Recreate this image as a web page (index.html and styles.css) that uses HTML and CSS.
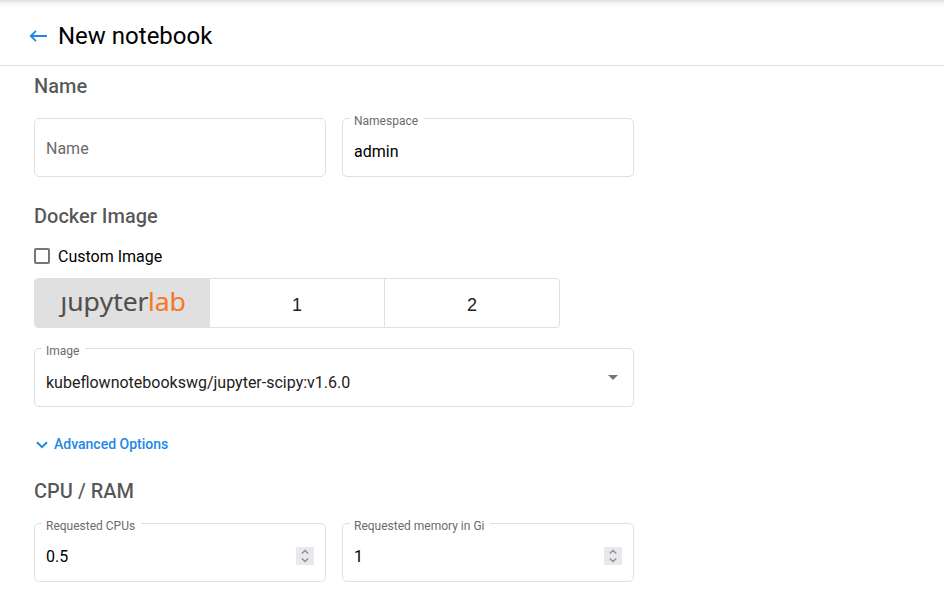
FILE: index.html
```html
<!DOCTYPE html>
<html lang="en">
<head>
<meta charset="utf-8">
<title>New notebook</title>
<link rel="stylesheet" href="styles.css">
</head>
<body>
<header class="toolbar">
  <svg class="back" width="20" height="14" viewBox="0 0 20 14"><path d="M19 7H3M8 1.800L2.800 7 8 12.200"/></svg>
  <h1>New notebook</h1>
</header>
<main class="form">
  <section class="name-section">
    <h2>Name</h2>
    <div class="row">
      <div class="field"><span class="placeholder">Name</span></div>
      <div class="field"><span class="label">Namespace</span><span class="value">admin</span></div>
    </div>
  </section>
  <section class="image-section">
    <h2>Docker Image</h2>
    <label class="check"><span class="box"></span><span class="check-text">Custom Image</span></label>
    <div class="toggles">
      <div class="toggle selected">
        <svg class="logo" width="130" height="36" viewBox="0 0 130 36"><text class="jup" x="3.500" y="26" textLength="88" lengthAdjust="spacingAndGlyphs">ȷupyter</text><text class="lab" x="91" y="26" textLength="38" lengthAdjust="spacingAndGlyphs">lab</text></svg>
      </div>
      <div class="toggle">1</div>
      <div class="toggle">2</div>
    </div>
    <div class="field select"><span class="label">Image</span><span class="value dark">kubeflownotebookswg/jupyter-scipy:v1.6.0</span><span class="caret"></span></div>
    <div class="advanced"><svg width="12" height="8" viewBox="0 0 12 8"><path d="M1 1.200l5 5 5-5"/></svg>Advanced Options</div>
  </section>
  <section class="cpu-section">
    <h2>CPU / RAM</h2>
    <div class="row">
      <div class="field"><span class="label">Requested CPUs</span><span class="value">0.5</span><span class="spin"><svg width="18" height="18" viewBox="0 0 18 18"><path d="M5.800 6.500L9 3.500l3.200 3M5.800 11.500l3.200 3 3.200-3"/></svg></span></div>
      <div class="field"><span class="label">Requested memory in Gi</span><span class="value">1</span><span class="spin"><svg width="18" height="18" viewBox="0 0 18 18"><path d="M5.800 6.500L9 3.500l3.200 3M5.800 11.500l3.200 3 3.200-3"/></svg></span></div>
    </div>
  </section>
</main>
</body>
</html>
```
FILE: styles.css
```css
* { box-sizing: border-box; }
body {
  margin: 0;
  height: 592px;
  overflow: hidden;
  background: #fff;
  color: #000;
  font: 16px/24px Roboto, sans-serif;
}
svg { display: block; fill: none; }
.toolbar {
  display: flex;
  align-items: center;
  height: 66px;
  padding: 6px 0 0 28px;
  border-bottom: 1px solid #dfdfdf;
  background: linear-gradient(#e2e3e4 0, #e7e8e9 2px, #f6f6f6 3px, #fff 8px);
}
.back { stroke: #1e88e5; stroke-width: 1.900; }
h1 { margin: 0 0 0 10px; font-size: 24px; line-height: 32px; font-weight: 400; }
.form { padding: 4px 0 0 34px; width: 634px; }
h2 { margin: 0; font-size: 20px; line-height: 32px; font-weight: 500; color: rgba(0, 0, 0, .66); }
.row { display: flex; gap: 16px; margin-top: 16px; }
.field {
  position: relative;
  flex: 1;
  display: flex;
  align-items: center;
  height: 59px;
  padding: 0 11px;
  border: 1px solid #e0e0e0;
  border-radius: 5px;
}
.placeholder { padding-top: 2px; color: #6b6b6b; }
.label {
  position: absolute;
  top: -6px;
  left: 7px;
  padding: 0 6px 0 4px;
  background: #fff;
  color: #6b6b6b;
  font-size: 12px;
  line-height: 16px;
}
.value { padding-top: 9px; }
.dark { color: #212121; padding-top: 11px; }
.image-section { margin-top: 23px; }
.check { display: flex; align-items: center; gap: 8px; height: 24px; margin-top: 12px; }
.check-text { padding-top: 2px; }
.box { width: 16px; height: 16px; border: 2px solid #757575; border-radius: 2px; }
.toggles {
  display: flex;
  width: 526px;
  height: 50px;
  margin: 10px 0 20px;
  border: 1px solid #e0e0e0;
  border-radius: 4px;
  overflow: hidden;
}
.toggle {
  flex: 1;
  display: flex;
  align-items: center;
  justify-content: center;
  padding-top: 4px;
  border-left: 1px solid #e0e0e0;
  color: #212121;
  font: 18px/24px "Liberation Sans", sans-serif;
}
.selected { background: #e0e0e0; border-left: 0; padding-top: 0; }
.logo { overflow: visible; font: 26px "Open Sans", sans-serif; stroke-width: .2; }
.jup { fill: #4e4e4e; stroke: #4e4e4e; }
.lab { fill: #f37726; stroke: #f37726; }
.caret { margin-left: auto; margin-right: 4px; border: 5px solid transparent; border-top-color: #757575; border-bottom: 0; }
.advanced {
  display: flex;
  align-items: center;
  gap: 6px;
  margin: 25px 0 0 2px;
  color: #1e88e5;
  font-size: 14px;
  font-weight: 500;
}
.advanced svg { stroke: #1e88e5; stroke-width: 2; margin-top: 2px; }
.cpu-section { margin-top: 19px; }
.spin { margin: 7px 0 0 auto; background: #e9e9ed; }
.spin svg { stroke: #8f8f9d; stroke-width: 1.500; }
```
